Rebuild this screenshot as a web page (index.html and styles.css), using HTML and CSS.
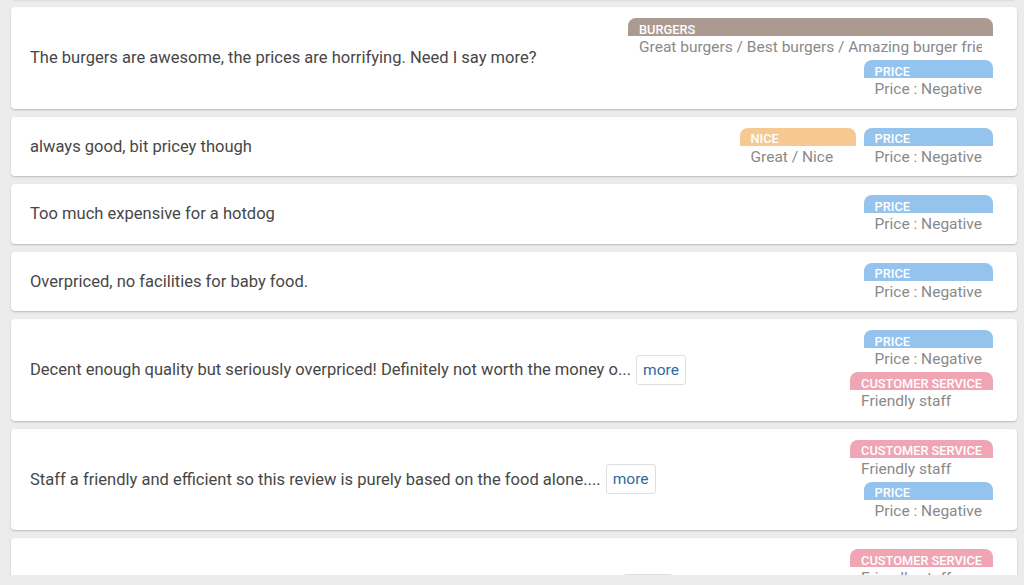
FILE: index.html
```html
<!DOCTYPE html>
<html lang="en">
<head>
<meta charset="utf-8">
<title>Reviews</title>
<link rel="stylesheet" href="styles.css">
</head>
<body>
<div class="viewport">
  <div class="list">
    <div class="card">
      <div class="review"><span class="review-text">Great food but way too expensive.</span></div>
      <div class="tags">
        <div class="tag-row">
          <div class="tag tag-price"><div class="tag-head">Price</div><div class="tag-body">Price : Negative</div></div>
        </div>
      </div>
    </div>

    <div class="card">
      <div class="review"><span class="review-text">The burgers are awesome, the prices are horrifying. Need I say more?</span></div>
      <div class="tags">
        <div class="tag-row">
          <div class="tag tag-burgers tag-wide"><div class="tag-head">Burgers</div><div class="tag-body">Great burgers / Best burgers / Amazing burger fries</div></div>
        </div>
        <div class="tag-row">
          <div class="tag tag-price"><div class="tag-head">Price</div><div class="tag-body">Price : Negative</div></div>
        </div>
      </div>
    </div>

    <div class="card">
      <div class="review"><span class="review-text">always good, bit pricey though</span></div>
      <div class="tags">
        <div class="tag-row">
          <div class="tag tag-nice"><div class="tag-head">Nice</div><div class="tag-body">Great / Nice</div></div>
          <div class="tag tag-price"><div class="tag-head">Price</div><div class="tag-body">Price : Negative</div></div>
        </div>
      </div>
    </div>

    <div class="card">
      <div class="review"><span class="review-text">Too much expensive for a hotdog</span></div>
      <div class="tags">
        <div class="tag-row">
          <div class="tag tag-price"><div class="tag-head">Price</div><div class="tag-body">Price : Negative</div></div>
        </div>
      </div>
    </div>

    <div class="card">
      <div class="review"><span class="review-text">Overpriced, no facilities for baby food.</span></div>
      <div class="tags">
        <div class="tag-row">
          <div class="tag tag-price"><div class="tag-head">Price</div><div class="tag-body">Price : Negative</div></div>
        </div>
      </div>
    </div>

    <div class="card">
      <div class="review"><span class="review-text">Decent enough quality but seriously overpriced! Definitely not worth the money o...</span><button class="more">more</button></div>
      <div class="tags">
        <div class="tag-row">
          <div class="tag tag-price"><div class="tag-head">Price</div><div class="tag-body">Price : Negative</div></div>
        </div>
        <div class="tag-row">
          <div class="tag tag-cs"><div class="tag-head">Customer Service</div><div class="tag-body">Friendly staff</div></div>
        </div>
      </div>
    </div>

    <div class="card">
      <div class="review"><span class="review-text">Staff a friendly and efficient so this review is purely based on the food alone....</span><button class="more">more</button></div>
      <div class="tags">
        <div class="tag-row">
          <div class="tag tag-cs"><div class="tag-head">Customer Service</div><div class="tag-body">Friendly staff</div></div>
        </div>
        <div class="tag-row">
          <div class="tag tag-price"><div class="tag-head">Price</div><div class="tag-body">Price : Negative</div></div>
        </div>
      </div>
    </div>

    <div class="card">
      <div class="review"><span class="review-text">Lovely staff, always helpful, but the food is far too pricey for what you get here....</span><button class="more">more</button></div>
      <div class="tags">
        <div class="tag-row">
          <div class="tag tag-cs"><div class="tag-head">Customer Service</div><div class="tag-body">Friendly staff</div></div>
        </div>
        <div class="tag-row">
          <div class="tag tag-price"><div class="tag-head">Price</div><div class="tag-body">Price : Negative</div></div>
        </div>
      </div>
    </div>
  </div>
</div>
</body>
</html>
```

FILE: styles.css
```css
* { box-sizing: border-box; }

html, body {
  margin: 0;
  padding: 0;
  background: #ececec;
  font-family: Roboto, "Liberation Sans", Arial, sans-serif;
}

.viewport {
  height: 575px;
  overflow: hidden;
  padding: 0 7px 0 11px;
}

.list {
  display: flex;
  flex-direction: column;
  gap: 8px;
  margin-top: -60.5px;
}

.card {
  background: #ffffff;
  border-radius: 4px;
  box-shadow: 0 1px 2px rgba(0, 0, 0, 0.22);
  padding: 11px 24px 11px 19px;
  display: flex;
  align-items: center;
  justify-content: space-between;
  gap: 16px;
  flex-shrink: 0;
}

.review {
  display: flex;
  align-items: center;
  gap: 5px;
  min-width: 0;
}

.review-text {
  font-size: 16.55px;
  color: #474747;
  white-space: nowrap;
}

.more {
  font-family: Roboto, "Liberation Sans", Arial, sans-serif;
  font-size: 15.5px;
  color: #2f6a9e;
  background: #fff;
  border: 1px solid #dedede;
  border-radius: 3px;
  height: 30px;
  width: 50px;
  padding: 0;
  cursor: pointer;
}

.tags {
  display: flex;
  flex-direction: column;
  align-items: flex-end;
  gap: 4.5px;
  flex-shrink: 0;
}

.tag-row {
  display: flex;
  gap: 8px;
  justify-content: flex-end;
}

.tag {
  min-width: 116px;
  max-width: 365px;
  overflow: hidden;
}

.tag-wide { width: 365px; }

.tag-head {
  height: 18px;
  border-radius: 8px 8px 0 0;
  padding: 2.5px 11px 0;
  font-size: 12.8px;
  font-weight: 500;
  line-height: 18px;
  color: #ffffff;
  text-transform: uppercase;
  white-space: nowrap;
  overflow: hidden;
}

.tag-body {
  height: 19.5px;
  margin: 0 11px;
  padding-top: 2px;
  font-size: 15.5px;
  line-height: 19px;
  color: #8a8a8a;
  white-space: nowrap;
  overflow: hidden;
}

.tag-price .tag-head { background: #94c4ee; }
.tag-burgers .tag-head { background: #ab9a91; }
.tag-nice .tag-head { background: #f6c892; }
.tag-cs .tag-head { background: #f0a5b5; }
```
